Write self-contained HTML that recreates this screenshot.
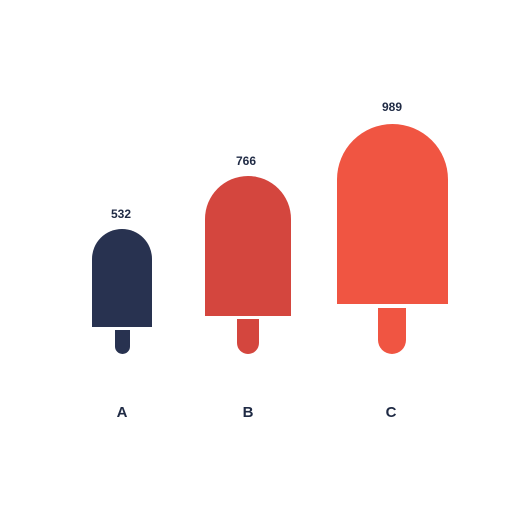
<!DOCTYPE html>
<html><head><style>
body{margin:0;width:532px;height:532px;background:#fff;position:relative;overflow:hidden;font-family:"Liberation Sans",sans-serif;font-weight:bold;color:#1f2a44}
div{position:absolute}
.t{font-size:12px;text-align:center;width:60px}
.l{font-size:15px;text-align:center;width:40px}
</style></head><body>
<div class="t" style="left:91px;top:207px">532</div>
<div class="t" style="left:216px;top:154px">766</div>
<div class="t" style="left:362px;top:100px">989</div>
<div style="left:92px;top:229px;width:60px;height:98px;background:#283250;border-radius:30px 30px 0 0"></div>
<div style="left:115px;top:330px;width:15px;height:24px;background:#283250;border-radius:0 0 7.5px 7.5px"></div>
<div style="left:205px;top:176px;width:86px;height:140px;background:#d4463e;border-radius:43px 43px 0 0"></div>
<div style="left:237px;top:319px;width:22px;height:35px;background:#d4463e;border-radius:0 0 11px 11px"></div>
<div style="left:337px;top:124px;width:111px;height:180px;background:#f05542;border-radius:55.5px 55.5px 0 0"></div>
<div style="left:378px;top:308px;width:28px;height:46px;background:#f05542;border-radius:0 0 14px 14px"></div>
<div class="l" style="left:102px;top:404px">A</div>
<div class="l" style="left:228px;top:404px">B</div>
<div class="l" style="left:371px;top:404px">C</div>
</body></html>
